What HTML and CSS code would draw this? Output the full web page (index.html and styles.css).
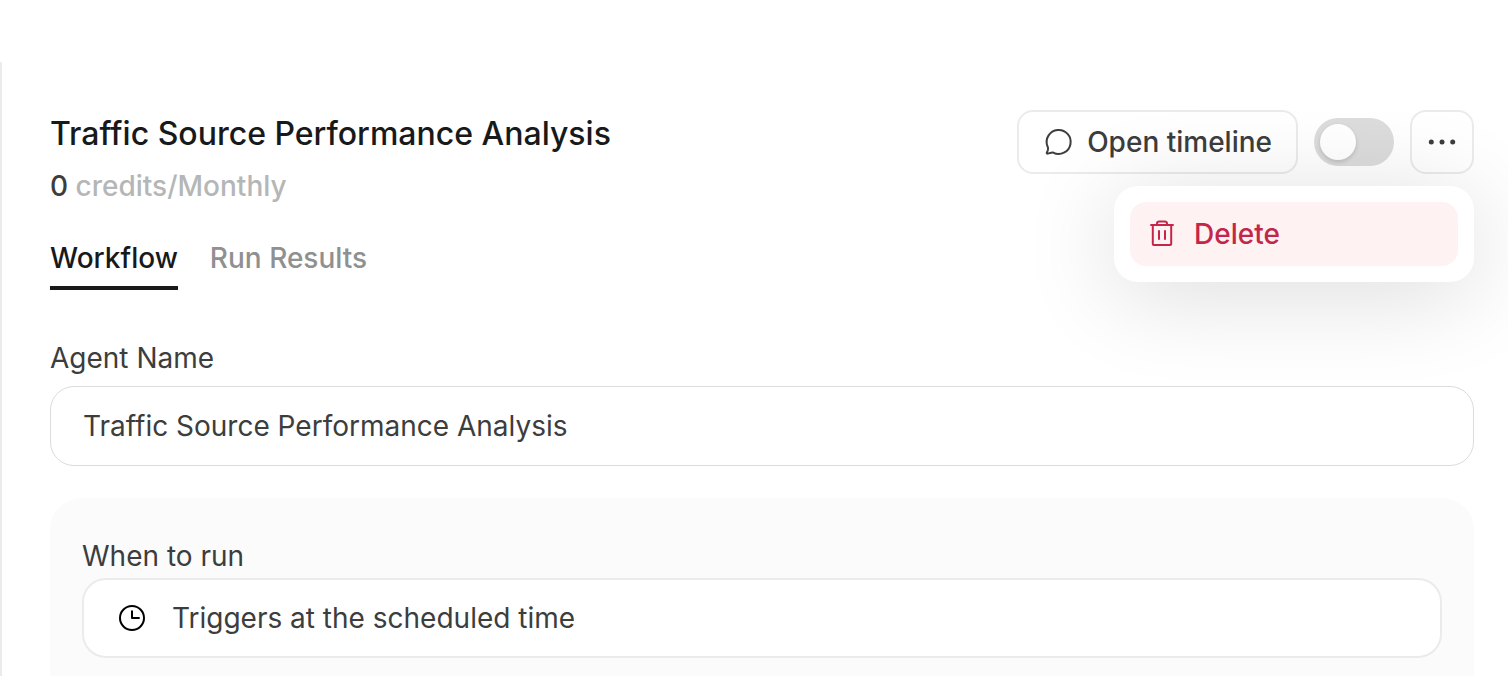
FILE: index.html
```html
<!DOCTYPE html>
<html lang="en">
<head>
<meta charset="utf-8">
<meta name="viewport" content="width=device-width, initial-scale=1">
<title>Traffic Source Performance Analysis</title>
<link rel="stylesheet" href="styles.css">
</head>
<body>
<main class="panel">
  <header class="header">
    <div class="heading">
      <h1 class="title">Traffic Source Performance Analysis</h1>
      <p class="credits"><span class="credits-count">0</span> credits/Monthly</p>
    </div>
    <div class="actions">
      <button class="button" type="button">
        <svg class="icon" viewBox="0 0 32 32" aria-hidden="true"><path d="M10.200 26.600A12 12 0 1 0 4.500 20.300Q5.600 22.300 4.800 24.300L3.800 26.600Q3.500 27.800 4.700 27.600L8 26.800Q9.200 26.400 10.200 26.600Z"/></svg>
        Open timeline
      </button>
      <input class="toggle" type="checkbox" role="switch" aria-label="Agent enabled">
      <div class="more">
        <button class="button button-square" type="button" aria-label="More actions" aria-haspopup="menu" aria-expanded="true">
          <svg class="icon dots" viewBox="0 0 32 32" aria-hidden="true"><circle cx="5.300" cy="16" r="2.500"/><circle cx="16" cy="16" r="2.500"/><circle cx="26.700" cy="16" r="2.500"/></svg>
        </button>
        <div class="menu" role="menu">
          <button class="menu-item" type="button" role="menuitem">
            <svg class="icon" viewBox="0 0 32 32" aria-hidden="true"><path d="M4.300 7H27.700M6.800 7V26Q6.800 27 7.800 27H24.200Q25.200 27 25.200 26V7M11 7V5.700Q11 3.400 13.300 3.400H18.700Q21 3.400 21 5.700V7M13 12.300V21.700M19 12.300V21.700"/></svg>
            Delete
          </button>
        </div>
      </div>
    </div>
  </header>

  <div class="tabs" role="tablist">
    <button class="tab tab-active" type="button" role="tab" aria-selected="true">Workflow</button>
    <button class="tab" type="button" role="tab" aria-selected="false">Run Results</button>
  </div>

  <div class="field">
    <label class="label" for="agent-name">Agent Name</label>
    <input class="text-input" id="agent-name" type="text" value="Traffic Source Performance Analysis">
  </div>

  <section class="card">
    <label class="label" for="trigger">When to run</label>
    <div class="select-box">
      <svg class="icon icon-clock" viewBox="0 0 32 32" aria-hidden="true"><circle cx="16" cy="16" r="12"/><path d="M16 8.500V16H23.700"/></svg>
      <select class="select" id="trigger"><option>Triggers at the scheduled time</option></select>
    </div>
  </section>
</main>
</body>
</html>
```
FILE: styles.css
```css
* {
  box-sizing: border-box;
}

body {
  margin: 0;
  padding-top: 62px;
  height: 100vh;
  overflow: hidden;
  display: flex;
  background: #fff;
  color: #3c3d3d;
  font: 400 28px/40px Inter, "Liberation Sans", sans-serif;
}

button,
input,
select {
  font: inherit;
  color: inherit;
  margin: 0;
}

.panel {
  flex: 1;
  min-width: 0;
  padding: 48px 34px 0 48px;
  border-left: 2px solid #ebebeb;
}

.header {
  display: flex;
  justify-content: space-between;
  align-items: flex-start;
}

.heading {
  display: flex;
  flex-direction: column;
  gap: 8px;
}

.title {
  margin: 0;
  font-size: 32px;
  line-height: 48px;
  font-weight: 500;
  color: #18191a;
}

.credits {
  margin: 0;
  font-weight: 500;
  color: #b5b6b6;
}

.credits-count {
  color: #3c3d3d;
}

.actions {
  display: flex;
  align-items: center;
  gap: 16px;
}

.icon {
  width: 32px;
  height: 32px;
  flex: none;
  fill: none;
  stroke: currentColor;
  stroke-width: 2;
  stroke-linejoin: round;
}

.dots {
  fill: currentColor;
  stroke: none;
}

.icon-clock {
  color: #000;
}

.button {
  display: flex;
  align-items: center;
  gap: 12px;
  height: 64px;
  padding: 0 24px;
  border: 2px solid #ebebeb;
  border-radius: 16px;
  background: #fff;
  font-weight: 500;
}

.button-square {
  padding: 0 14px;
}

.toggle {
  appearance: none;
  display: flex;
  align-items: center;
  width: 80px;
  height: 48px;
  padding: 0 6px;
  border-radius: 24px;
  background: #dcdcdc;
}

.toggle::before {
  content: "";
  width: 36px;
  height: 36px;
  border-radius: 50%;
  background: #fff;
  box-shadow: 0 2px 4px rgba(0, 0, 0, 0.15);
}

.toggle:checked {
  justify-content: flex-end;
  background: #18191a;
}

.more {
  position: relative;
}

.menu {
  position: absolute;
  top: calc(100% + 12px);
  right: 0;
  z-index: 1;
  width: 360px;
  padding: 16px;
  border-radius: 24px;
  background: #fff;
  box-shadow: 0 12px 96px rgba(0, 0, 0, 0.14);
}

.menu-item {
  display: flex;
  align-items: center;
  gap: 16px;
  width: 100%;
  height: 64px;
  padding: 0 16px;
  border: 0;
  border-radius: 16px;
  background: #fff2f2;
  color: #c4264a;
  font-weight: 500;
}

.tabs {
  display: flex;
  gap: 32px;
  margin-top: 32px;
}

.tab {
  padding: 0 0 8px;
  border: 0;
  border-bottom: 4px solid transparent;
  background: none;
  font-weight: 500;
  color: #8f9090;
}

.tab-active {
  border-color: #18191a;
  color: #18191a;
}

.field {
  display: flex;
  flex-direction: column;
  gap: 8px;
  margin-top: 48px;
}

.text-input {
  width: 100%;
  height: 80px;
  padding: 0 32px;
  border: 1px solid #dcdcdc;
  border-radius: 24px;
  background: #fff;
}

.card {
  display: flex;
  flex-direction: column;
  gap: 2px;
  margin-top: 32px;
  padding: 38px 32px 64px;
  border-radius: 32px;
  background: #fbfbfb;
}

.select-box {
  display: flex;
  align-items: center;
  gap: 24px;
  height: 80px;
  padding: 0 32px;
  border: 2px solid #ebebeb;
  border-radius: 24px;
  background: #fff;
}

.select {
  appearance: none;
  flex: 1;
  min-width: 0;
  padding: 0;
  border: 0;
  background: none;
}
```
